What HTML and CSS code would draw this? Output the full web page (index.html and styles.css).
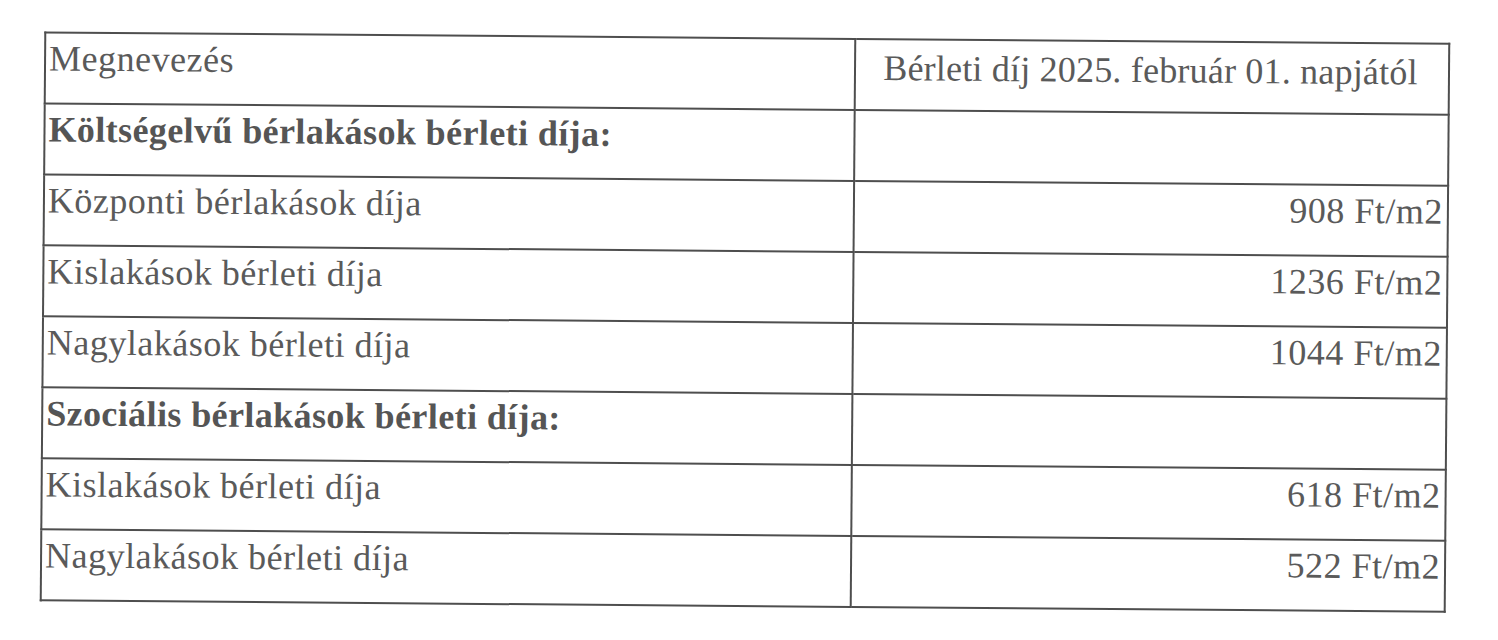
FILE: index.html
```html
<!DOCTYPE html>
<html lang="hu">
<head>
<meta charset="utf-8">
<title>Bérleti díjak</title>
<link rel="stylesheet" href="styles.css">
</head>
<body>
<div class="sheet">
<table class="fee-table">
  <colgroup>
    <col class="col-name">
    <col class="col-fee">
  </colgroup>
  <tr>
    <td class="cell">Megnevezés</td>
    <td class="cell cell-head">Bérleti díj 2025. február 01. napjától</td>
  </tr>
  <tr>
    <td class="cell cell-bold">Költségelvű bérlakások bérleti díja:</td>
    <td class="cell"></td>
  </tr>
  <tr>
    <td class="cell">Központi bérlakások díja</td>
    <td class="cell cell-num">908 Ft/m2</td>
  </tr>
  <tr>
    <td class="cell">Kislakások bérleti díja</td>
    <td class="cell cell-num">1236 Ft/m2</td>
  </tr>
  <tr>
    <td class="cell">Nagylakások bérleti díja</td>
    <td class="cell cell-num">1044 Ft/m2</td>
  </tr>
  <tr>
    <td class="cell cell-bold">Szociális bérlakások bérleti díja:</td>
    <td class="cell"></td>
  </tr>
  <tr>
    <td class="cell">Kislakások bérleti díja</td>
    <td class="cell cell-num">618 Ft/m2</td>
  </tr>
  <tr>
    <td class="cell">Nagylakások bérleti díja</td>
    <td class="cell cell-num">522 Ft/m2</td>
  </tr>
</table>
</div>
</body>
</html>
```

FILE: styles.css
```css
html, body {
  margin: 0;
  padding: 0;
  background: #ffffff;
}

body {
  font-family: "Liberation Serif", "Times New Roman", serif;
  color: #5a5a5a;
}

.sheet {
  width: 1498px;
  height: 640px;
  box-sizing: border-box;
  padding: 37px 0 0 42px;
  transform: rotate(0.46deg);
  transform-origin: 743px 321px;
}

.fee-table {
  width: 1404px;
  border-collapse: collapse;
  table-layout: fixed;
}

.col-name {
  width: 810px;
}

.col-fee {
  width: 594px;
}

.cell {
  height: 71px;
  box-sizing: border-box;
  padding: 5px 6px 0 3px;
  border: 2px solid #4e4e4e;
  vertical-align: top;
  font-size: 36px;
  line-height: 40px;
  letter-spacing: 0.5px;
  white-space: nowrap;
}

.cell-bold {
  font-weight: bold;
  letter-spacing: 0.4px;
  color: #555555;
}

.cell-head {
  text-align: center;
  padding-top: 8px;
  letter-spacing: 0.2px;
}

.cell-num {
  text-align: right;
  padding-right: 4px;
}
```
